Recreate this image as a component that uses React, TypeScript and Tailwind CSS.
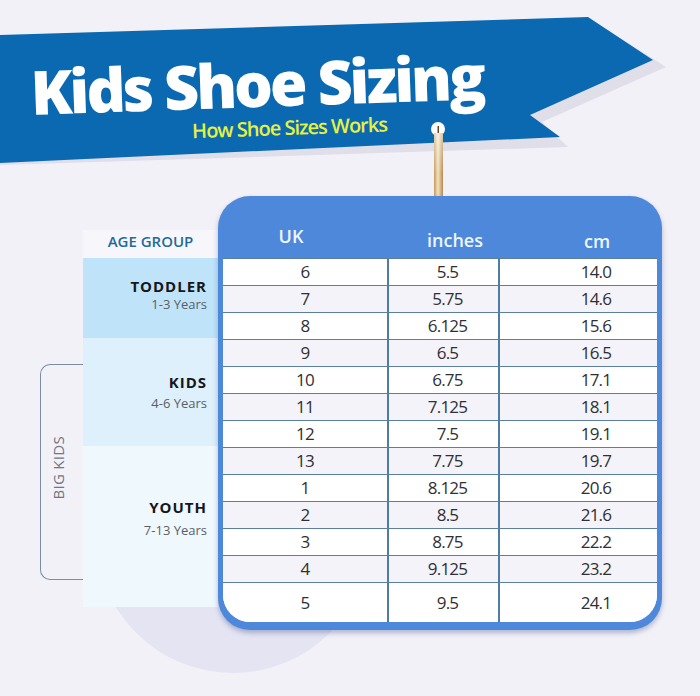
import React from "react";

const rows: [string, string, string][] = [
  ["6", "5.5", "14.0"],
  ["7", "5.75", "14.6"],
  ["8", "6.125", "15.6"],
  ["9", "6.5", "16.5"],
  ["10", "6.75", "17.1"],
  ["11", "7.125", "18.1"],
  ["12", "7.5", "19.1"],
  ["13", "7.75", "19.7"],
  ["1", "8.125", "20.6"],
  ["2", "8.5", "21.6"],
  ["3", "8.75", "22.2"],
  ["4", "9.125", "23.2"],
  ["5", "9.5", "24.1"],
];

const Banner = () => (
  <svg className="absolute inset-0" width="700" height="196" viewBox="0 0 700 196">
    <polygon points="0,37 598,24 666,67 542,122 568,147 0,165" fill="#dfdee9" />
    <polygon points="0,35 588,17 653,60 530,115 560,137 0,163" fill="#0b69b1" />
  </svg>
);

const Hanger = () => (
  <svg className="absolute left-[428px] top-[120px]" width="22" height="98" viewBox="0 0 22 98">
    <defs>
      <linearGradient id="gold" x1="0" y1="0" x2="1" y2="0">
        <stop offset="0" stopColor="#c59b5c" />
        <stop offset="0.45" stopColor="#f2e2c2" />
        <stop offset="1" stopColor="#b8894a" />
      </linearGradient>
      <linearGradient id="fade" x1="0" y1="0" x2="0" y2="1">
        <stop offset="0" stopColor="#ffffff" stopOpacity="0.5" />
        <stop offset="1" stopColor="#ffffff" stopOpacity="0" />
      </linearGradient>
    </defs>
    <circle cx="10" cy="9" r="7" fill="#ffffff" />
    <circle cx="11" cy="87" r="7" fill="#ffffff" />
    <rect x="6" y="13" width="9" height="72" fill="url(#gold)" />
    <rect x="6" y="13" width="9" height="40" fill="url(#fade)" />
    <rect x="9.5" y="6" width="1.5" height="7" fill="#5a4a30" />
    <rect x="10" y="84" width="2" height="8" fill="#8a6a3a" />
  </svg>
);

export default function App() {
  return (
    <div className="relative w-[700px] h-[696px] overflow-hidden bg-[#f2f1f8] font-['Open_Sans',sans-serif]">
      {/* soft circle behind the chart */}
      <div className="absolute left-[96px] top-[399px] w-[274px] h-[274px] rounded-full bg-[#e4e4f3]" />

      {/* Title ribbon */}
      <div className="relative h-[196px]">
        <Banner />
        <div className="relative pt-[64px] pl-[30px] -rotate-2 origin-[0_50%]">
          <h1 className="text-[61px] leading-[58px] font-extrabold tracking-[-3px] text-white whitespace-nowrap">
            Kids Shoe Sizing
          </h1>
          <p className="ml-[160px] mt-[6px] text-[20px] leading-[20px] font-semibold tracking-[-1px] text-[#e5f23f] whitespace-nowrap">
            How Shoe Sizes Works
          </p>
        </div>
      </div>

      <Hanger />

      <div className="relative flex pl-[40px]">
        {/* Big kids bracket */}
        <div className="w-[43px] h-[216px] mt-[168px] border-l border-t border-b border-[#7d8ba3] rounded-l-[10px] flex items-center justify-center">
          <span className="[writing-mode:vertical-rl] rotate-180 text-[15px] leading-none tracking-[0.3px] text-[#6f7787] -ml-[8px] mb-[8px]">
            BIG KIDS
          </span>
        </div>

        {/* Age groups */}
        <div className="w-[135px] mt-[34px] flex flex-col">
          <div className="h-[28px] bg-[#f7f6fb] pt-[3px] text-center text-[15px] leading-[16px] font-semibold text-[#1f6b9b]">
            AGE GROUP
          </div>
          <div className="h-[80px] bg-[#bfe3f8] pt-[20px] pr-[11px] text-right">
            <p className="text-[15px] leading-[17px] font-bold tracking-[1px] text-[#16161c]">TODDLER</p>
            <p className="mt-[1px] text-[13px] leading-[16px] text-[#5b5e68]">1-3 Years</p>
          </div>
          <div className="h-[108px] bg-[#ddf0fb] pt-[36px] pr-[11px] text-right">
            <p className="text-[15px] leading-[17px] font-bold tracking-[1px] text-[#16161c]">KIDS</p>
            <p className="mt-[4px] text-[13px] leading-[16px] text-[#5b5e68]">4-6 Years</p>
          </div>
          <div className="h-[161px] bg-[#eff8fd] pt-[53px] pr-[11px] text-right">
            <p className="text-[15px] leading-[17px] font-bold tracking-[1px] text-[#16161c]">YOUTH</p>
            <p className="mt-[6px] text-[13px] leading-[16px] text-[#5b5e68]">7-13 Years</p>
          </div>
        </div>

        {/* Size chart card */}
        <div className="w-[444px] h-[434px] rounded-[32px] bg-[#4d88da] px-[5px] pb-[8px] flex flex-col shadow-[0_3px_5px_rgba(50,70,130,0.35)]">
          <div className="h-[62px] flex text-[18px] leading-none font-semibold text-[#eef6ff]">
            <div className="w-[164px] flex items-end justify-center pb-[13px] pr-[28px]">UK</div>
            <div className="w-[111px] flex items-end justify-center pb-[9px] pl-[25px]">inches</div>
            <div className="flex-1 flex items-end justify-center pb-[8px] pl-[39px]">cm</div>
          </div>
          <div className="flex-1 bg-white rounded-b-[27px] overflow-hidden">
            {rows.map(([uk, inch, cm], i) => (
              <div
                key={uk}
                className={`flex border-t-[1.5px] border-[#5b7f9e] text-[17px] tracking-[-0.8px] text-[#2f3035] ${
                  i === rows.length - 1 ? "h-[40px]" : "h-[27px]"
                } ${i % 2 === 0 ? "bg-white" : "bg-[#f4f3f9]"}`}
              >
                <div className="w-[164px] flex items-center justify-center">{uk}</div>
                <div className="w-[111px] border-l-2 border-[#4f7ca3] flex items-center justify-center pl-[8px]">{inch}</div>
                <div className="flex-1 border-l-2 border-[#4f7ca3] flex items-center justify-center pl-[35px]">{cm}</div>
              </div>
            ))}
          </div>
        </div>
      </div>
    </div>
  );
}
